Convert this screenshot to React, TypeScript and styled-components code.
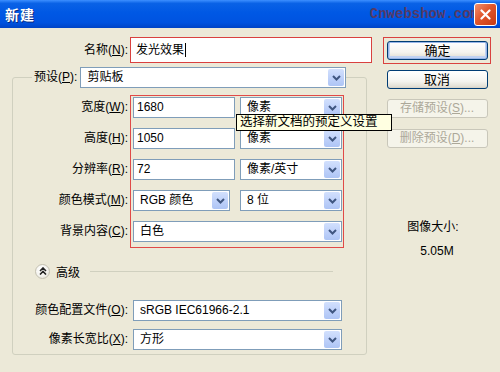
import React from 'react';
import styled, { createGlobalStyle, css } from 'styled-components';

const GlobalStyle = createGlobalStyle`
    html, body {
        margin: 0;
        padding: 0;
        background: #ECE9D8;
    }
    body {
        font-family: "Liberation Sans", "Noto Sans CJK SC", sans-serif;
        font-size: 12px;
        color: #000;
    }
`;

const Window = styled.div`
    position: relative;
    width: 500px;
    height: 372px;
    background: #ECE9D8;
    overflow: hidden;
`;

const TitleBar = styled.div`
    height: 28px;
    display: flex;
    align-items: center;
    padding: 0 3px 0 5px;
    box-sizing: border-box;
    background: linear-gradient(to bottom, #3d8fff 0%, #0a62e6 12%, #0058e4 45%, #0053e0 80%, #0044c6 100%);
`;

const TitleText = styled.div`
    color: #fff;
    font-size: 14px;
    font-weight: bold;
    letter-spacing: 1px;
    text-shadow: 1px 1px 0 #0a2a80;
`;

const Watermark = styled.span`
    margin-left: auto;
    margin-right: -5px;
    font-family: "Liberation Mono", monospace;
    font-size: 14px;
    font-weight: bold;
    color: #553a66;
`;

const CloseButton = styled.div`
    position: relative;
    width: 21px;
    height: 21px;
    border: 1px solid #fff;
    border-radius: 3px;
    background: linear-gradient(to bottom right, #f09070 0%, #e0562c 45%, #c83a12 100%);
    display: flex;
    align-items: center;
    justify-content: center;
`;

const Body = styled.div`
    display: flex;
    padding-top: 9px;
`;

const LeftColumn = styled.div`
    width: 372px;
`;

const NameRow = styled.div`
    display: flex;
    align-items: center;
    gap: 2px;
`;

const Label = styled.div<{ $width?: number }>`
    width: ${p => (p.$width ? `${p.$width}px` : 'auto')};
    text-align: right;
    white-space: nowrap;
    height: 21px;
    line-height: 21px;
`;

const NameInput = styled.div`
    width: 242px;
    height: 26px;
    box-sizing: border-box;
    border: 1px solid #d9413f;
    background: #fff;
    padding-left: 5px;
    line-height: 24px;
    display: flex;
    align-items: center;
`;

const Caret = styled.span`
    display: inline-block;
    width: 1px;
    height: 14px;
    background: #000;
    margin-left: 1px;
`;

const TextBox = styled.div<{ $width: number }>`
    width: ${p => p.$width}px;
    height: 21px;
    box-sizing: border-box;
    border: 1px solid #7f9db9;
    background: #fff;
    padding-left: 3px;
    line-height: 19px;
`;

const Combo = styled.div<{ $width: number }>`
    width: ${p => p.$width}px;
    height: 21px;
    box-sizing: border-box;
    border: 1px solid #7f9db9;
    background: #fff;
    display: flex;
    align-items: stretch;
`;

const ComboValue = styled.div`
    flex: 1;
    padding-left: 6px;
    line-height: 19px;
    white-space: nowrap;
    overflow: hidden;
`;

const ComboArrow = styled.div`
    width: 16px;
    margin: 1px;
    border-radius: 2px;
    background: linear-gradient(to bottom, #d2e0fd 0%, #bccff9 60%, #aec5f5 100%);
    display: flex;
    align-items: center;
    justify-content: center;
`;

const Group = styled.fieldset`
    margin: 4px 0 0 12px;
    width: 355px;
    box-sizing: border-box;
    padding: 7px 0 4px 0;
    border: 1px solid #d0d0bf;
    border-radius: 3px;
    min-width: 0;
`;

const GroupLegend = styled.legend`
    margin-left: 19px;
    padding: 0 0 0 2px;
    display: flex;
    align-items: center;
    gap: 3px;
`;

const FieldsGrid = styled.div`
    display: grid;
    grid-template-columns: 115px 214px;
    column-gap: 2px;
    align-items: start;
`;

const LabelStack = styled.div`
    display: flex;
    flex-direction: column;
    gap: 10px;
    padding-top: 2px;
`;

const RedFrame = styled.div`
    border: 1px solid #e04a48;
    padding: 1px 1px 5px 2px;
    display: flex;
    flex-direction: column;
    gap: 10px;
`;

const ControlRow = styled.div`
    display: flex;
    justify-content: space-between;
`;

const AdvancedRow = styled.div`
    display: flex;
    align-items: center;
    margin: 15px 0 0 22px;
    height: 16px;
    gap: 6px;
`;

const Toggle = styled.div`
    width: 15px;
    height: 15px;
    box-sizing: border-box;
    border-radius: 50%;
    border: 1px solid #c4c1b2;
    background: radial-gradient(circle at 40% 35%, #ffffff 0%, #f4f3ee 55%, #d8d5c8 100%);
    display: flex;
    align-items: center;
    justify-content: center;
`;

const Rule = styled.div`
    width: 243px;
    height: 1px;
    margin-left: 4px;
    background: #d0d0bf;
`;

const ProfileGrid = styled.div`
    display: grid;
    grid-template-columns: 115px 209px;
    column-gap: 5px;
    row-gap: 8px;
    margin-top: 21px;
`;

const RightColumn = styled.div`
    width: 108px;
    margin-left: 11px;
    display: flex;
    flex-direction: column;
    align-items: center;
`;

const DefaultFrame = styled.div`
    border: 1px solid #d9413f;
    padding: 3px 2px 3px 3px;
`;

const Button = styled.div<{ $disabled?: boolean; $default?: boolean; $gap?: number }>`
    width: 101px;
    height: 19px;
    box-sizing: border-box;
    margin-top: ${p => p.$gap ?? 0}px;
    border: 1px solid #003c74;
    border-radius: 3px;
    background: linear-gradient(to bottom, #ffffff 0%, #f5f4ef 60%, #e3e0d6 90%, #d6d0c5 100%);
    text-align: center;
    line-height: 17px;
    font-size: 13px;
    ${p => p.$default && css`
        box-shadow: inset 0 0 0 1px #98b6e8, inset 0 -1px 0 2px #c0d2f2;
    `}
    ${p => p.$disabled && css`
        border-color: #c9c7ba;
        background: #f5f4ea;
        color: #aca899;
        font-size: 12px;
    `}
`;

const SizeTitle = styled.div`
    margin-top: 72px;
    line-height: 14px;
    margin-right: 8px;
`;

const SizeValue = styled.div`
    margin-top: 10px;
    line-height: 14px;
    font-family: "Liberation Sans", sans-serif;
    font-size: 12px;
`;

const Tooltip = styled.div`
    position: absolute;
    left: 236px;
    top: 114px;
    width: 156px;
    height: 17px;
    box-sizing: border-box;
    background: #ffffe1;
    border: 1px solid #000;
    padding-left: 3px;
    line-height: 15px;
    font-size: 12.5px;
    white-space: nowrap;
`;

const Chevron = () => (
    <svg width="9" height="6" viewBox="0 0 9 6">
        <path d="M1 1 L4.5 4.5 L8 1" fill="none" stroke="#3f5680" strokeWidth="2" />
    </svg>
);

const DoubleUp = () => (
    <svg width="8" height="8" viewBox="0 0 8 8">
        <path d="M1 4 L4 1 L7 4 M1 7.5 L4 4.5 L7 7.5" fill="none" stroke="#222" strokeWidth="1.6" />
    </svg>
);

function Select({ value, width }: { value: string; width: number }) {
    return (
        <Combo $width={width}>
            <ComboValue>{value}</ComboValue>
            <ComboArrow><Chevron /></ComboArrow>
        </Combo>
    );
}

function Mn({ k }: { k: string }) {
    return <>(<u>{k}</u>):</>;
}

export default function App() {
    return (
        <Window>
            <GlobalStyle />
            <TitleBar>
                <TitleText>新建</TitleText>
                <Watermark>Cnwebshow.com</Watermark>
                <CloseButton>
                    <svg width="11" height="11" viewBox="0 0 11 11">
                        <path d="M1.5 1.5 L9.5 9.5 M9.5 1.5 L1.5 9.5" stroke="#fff" strokeWidth="2.2" strokeLinecap="round" />
                    </svg>
                </CloseButton>
            </TitleBar>
            <Body>
                <LeftColumn>
                    <NameRow>
                        <Label $width={128}>名称<Mn k="N" /></Label>
                        <NameInput>发光效果<Caret /></NameInput>
                    </NameRow>
                    <Group>
                        <GroupLegend>
                            <Label>预设<Mn k="P" /></Label>
                            <Select value="剪贴板" width={266} />
                        </GroupLegend>
                        <FieldsGrid>
                            <LabelStack>
                                <Label>宽度<Mn k="W" /></Label>
                                <Label>高度<Mn k="H" /></Label>
                                <Label>分辨率<Mn k="R" /></Label>
                                <Label>颜色模式<Mn k="M" /></Label>
                                <Label>背景内容<Mn k="C" /></Label>
                            </LabelStack>
                            <RedFrame>
                                <ControlRow>
                                    <TextBox $width={102}>1680</TextBox>
                                    <Select value="像素" width={102} />
                                </ControlRow>
                                <ControlRow>
                                    <TextBox $width={102}>1050</TextBox>
                                    <Select value="像素" width={102} />
                                </ControlRow>
                                <ControlRow>
                                    <TextBox $width={102}>72</TextBox>
                                    <Select value="像素/英寸" width={102} />
                                </ControlRow>
                                <ControlRow>
                                    <Select value="RGB 颜色" width={97} />
                                    <Select value="8 位" width={102} />
                                </ControlRow>
                                <ControlRow>
                                    <Select value="白色" width={209} />
                                </ControlRow>
                            </RedFrame>
                        </FieldsGrid>
                        <AdvancedRow>
                            <Toggle><DoubleUp /></Toggle>
                            <span>高级</span>
                            <Rule />
                        </AdvancedRow>
                        <ProfileGrid>
                            <Label>颜色配置文件<Mn k="O" /></Label>
                            <Select value="sRGB IEC61966-2.1" width={209} />
                            <Label>像素长宽比<Mn k="X" /></Label>
                            <Select value="方形" width={209} />
                        </ProfileGrid>
                    </Group>
                </LeftColumn>
                <RightColumn>
                    <DefaultFrame>
                        <Button $default>确定</Button>
                    </DefaultFrame>
                    <Button $gap={6}>取消</Button>
                    <Button $gap={10} $disabled>存储预设(<u>S</u>)...</Button>
                    <Button $gap={11} $disabled>删除预设(<u>D</u>)...</Button>
                    <SizeTitle>图像大小:</SizeTitle>
                    <SizeValue>5.05M</SizeValue>
                </RightColumn>
            </Body>
            <Tooltip>选择新文档的预定义设置</Tooltip>
        </Window>
    );
}
